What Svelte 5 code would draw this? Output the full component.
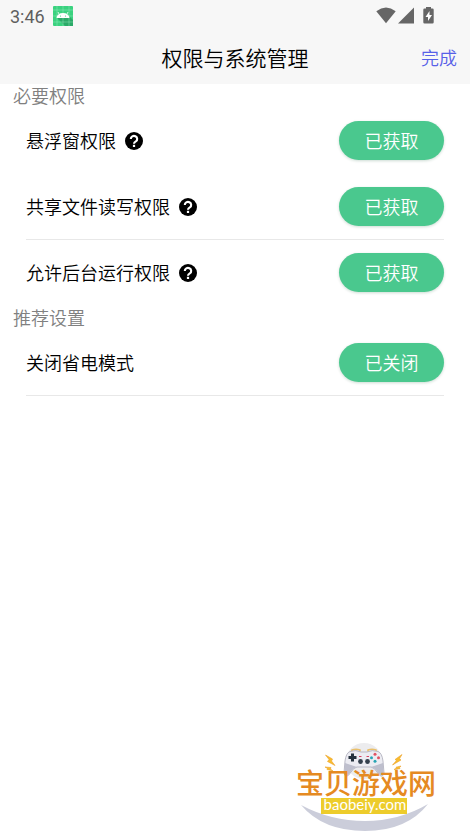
<script>
  const groups = [
    {
      title: '必要权限',
      rows: [
        { name: '悬浮窗权限', help: true, state: '已获取', line: false },
        { name: '共享文件读写权限', help: true, state: '已获取', line: true },
        { name: '允许后台运行权限', help: true, state: '已获取', line: false }
      ]
    },
    {
      title: '推荐设置',
      rows: [{ name: '关闭省电模式', help: false, state: '已关闭', line: true }]
    }
  ];
</script>

<div class="screen">
  <div class="status">
    <span class="clock">3:46</span>
    <svg class="app" width="20" height="20" viewBox="0 0 20 20" aria-hidden="true">
      <rect width="20" height="20" rx="1" fill="#3ad27f" />
      <path d="M4 12 12 20H20V14L15 9Z" fill="#2baa68" />
      <path d="M4 0V20M10 0V20M16 0V20M0 4H20M0 10H20M0 16H20" stroke="#a5edc5" stroke-width=".4" />
      <path d="M3.5 12a6.5 5 0 0 1 13 0Z" fill="#fff" />
      <path d="M6 8 5 6M14 8l1-2" stroke="#fff" stroke-width=".8" />
      <circle cx="7.5" cy="10" r=".6" fill="#3ad27f" /><circle cx="12.5" cy="10" r=".6" fill="#3ad27f" />
    </svg>
    <svg class="signals" width="60" height="18" viewBox="0 0 60 18" aria-hidden="true">
      <g fill="#666">
        <path d="M.3 4.2Q10 -3.2 19.7 4.2L10 16.3Z" />
        <path d="M38 .5V16.5H22Z" />
        <path d="M50 0h5v1.5h1.5q1.2 0 1.2 1.2V15.3q0 1.2-1.2 1.2h-8q-1.2 0-1.2-1.2V2.7q0-1.2 1.2-1.2H50Z" />
      </g>
      <path d="M53.5 4 49.5 10h2.5v4l4-6h-2.5Z" fill="#fff" />
    </svg>
  </div>

  <header>
    <h1>权限与系统管理</h1>
    <button class="done">完成</button>
  </header>

  <main>
    {#each groups as group}
      <section>
        <h2>{group.title}</h2>
        {#each group.rows as row}
          <div class="row" class:line={row.line}>
            <span class="name">{row.name}</span>
            {#if row.help}
              <button class="help" aria-label="{row.name}说明">
                <svg width="18" height="18" viewBox="0 0 18 18" aria-hidden="true">
                  <circle cx="9" cy="9" r="9" fill="#000" />
                  <path d="M5.8 7a3.2 3 0 1 1 5 2.4Q9 10.4 9 11.7" fill="none" stroke="#fff" stroke-width="2.1" />
                  <rect x="7.9" y="12.8" width="2.2" height="2.2" fill="#fff" />
                </svg>
              </button>
            {/if}
            <button class="pill">{row.state}</button>
          </div>
        {/each}
      </section>
    {/each}
  </main>

  <svg class="brand" width="140" height="92" viewBox="0 0 140 92">
    <circle cx="68" cy="20" r="18" fill="#ececee" />
    <path d="M5 64Q35 80 69 80T132 63Q111 90 69 90T5 64Z" fill="#cbcdda" />
    <path d="M56 10.500V9Q60 7.500 64 9V10.500M72 10.500V9Q76 7.500 80 9V10.500" fill="none" stroke="#eac06b" stroke-width="1.600" />
    <path d="M54 10.500Q60 8.500 65 11H71Q76 8.500 82 10.500Q86 12 87 20L88 32Q86 39 81 31Q79 27 75 26H61Q57 27 55 31Q50 39 48 32L49 20Q50 12 54 10.500Z" fill="#ececf2" stroke="#aaaab8" stroke-width=".800" />
    <path d="M49 22 48.500 32Q50 38 54.500 31Q57 27 61 26ZM87 22 87.500 32Q86 38 81.500 31Q79 27 75 26Z" fill="#bebfcd" />
    <path d="M56.500 12.500v8M52.500 16.500h8" stroke="#24313d" stroke-width="3" />
    <circle cx="64.500" cy="20.500" r="2.400" fill="#34404d" /><circle cx="71.500" cy="20.500" r="2.400" fill="#34404d" />
    <path d="M63 15.500h2.500M70.500 15.500H73" stroke="#d74563" stroke-width="1.200" />
    <circle cx="79" cy="13.200" r="1.500" fill="#e15262" /><circle cx="79" cy="20.200" r="1.500" fill="#27a5b5" />
    <circle cx="75.500" cy="16.700" r="1.500" fill="#27a5b5" /><circle cx="82.500" cy="16.700" r="1.500" fill="#e15262" />
    <path d="M29.500 14 36.500 18 35.500 20 39 24.500 31.500 20.500 33 18.500ZM29 26l6 .500-.500 1.500 2.500 2-6-1.500.500-1ZM106 13.500l-7 5 1.500 1-4 4.500 8.500-5-1.500-1.200ZM105 25l-5 1.200.500.800-2.500 1.500 6-.800-.500-1Z" fill="#f8bd2e" stroke="#eda12b" stroke-width=".600" />
    <text class="brand-name" x="0" y="53">宝贝游戏网</text>
    <rect x="25" y="57" width="86" height="16" fill="#edcc2b" />
    <text class="brand-url" x="69" y="69" text-anchor="middle">baobeiy.com</text>
  </svg>
</div>

<style>
  :global(body) { margin: 0; background: #fff; }
  .screen {
    min-height: 100vh;
    display: flex;
    flex-direction: column;
    box-sizing: border-box;
    padding-bottom: 3px;
    font-family: "Noto Sans CJK SC", sans-serif;
    font-weight: 350;
    color: #000;
  }
  button {
    padding: 0;
    border: 0;
    background: none;
    font: inherit;
    cursor: pointer;
  }
  .status {
    display: flex;
    align-items: center;
    gap: 8px;
    height: 32px;
    padding: 0 34px 0 10px;
    background: #f7f7f7;
  }
  .clock { font: 400 18px Roboto, sans-serif; color: #5f5f5f; }
  .signals { margin-left: auto; }
  header {
    display: grid;
    grid-template-columns: 1fr auto 1fr;
    align-items: center;
    box-sizing: border-box;
    height: 52px;
    padding: 0 13px 3px;
    background: #f7f7f7;
  }
  h1 {
    grid-column: 2;
    margin: 0;
    font-size: 21px;
    line-height: 32px;
    font-weight: 350;
  }
  .done { justify-self: end; font-size: 18px; line-height: 26px; color: #5760e8; }
  h2 {
    margin: 0;
    padding: 0 13px 2px;
    font-size: 18px;
    line-height: 22px;
    font-weight: 350;
    color: #808080;
  }
  .row {
    display: flex;
    align-items: center;
    box-sizing: border-box;
    height: 66px;
    margin: 0 26px;
    border-bottom: 1px solid transparent;
  }
  .line { border-color: #e8e8e8; }
  .name { padding-bottom: 2px; font-size: 18px; line-height: 26px; }
  .help { display: flex; margin-left: 9px; }
  .pill {
    width: 105px;
    height: 39px;
    margin-left: auto;
    padding-bottom: 2px;
    border-radius: 20px;
    background: #4ac88e;
    box-shadow: 0 1px 3px rgba(0, 80, 40, 0.2);
    color: #fff;
    font-size: 18px;
    line-height: 26px;
  }
  .brand { margin: auto 34px 0 0; align-self: flex-end; }
  .brand-name { font: 500 28px "Noto Sans CJK SC", sans-serif; fill: #e58a22; }
  .brand-url { font: 400 15px Lato, "Noto Sans", sans-serif; fill: #fff; }
</style>
